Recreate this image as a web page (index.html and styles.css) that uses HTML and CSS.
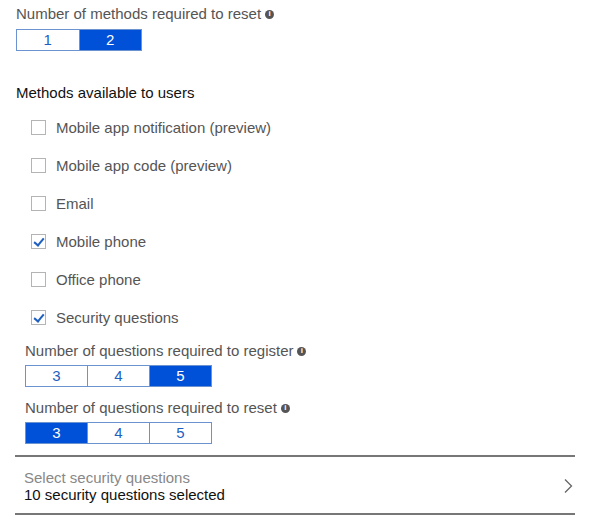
FILE: index.html
```html
<html lang="en">

<head>
  <meta charset="UTF-8">
  <title>Password reset methods</title>
  <link rel="stylesheet" href="styles.css">
</head>

<body>
  <div class="field top">
    <div class="label">Number of methods required to reset <span class="info">i</span></div>
    <div class="seg seg2">
      <span>1</span>
      <span class="on">2</span>
    </div>
  </div>

  <h2>Methods available to users</h2>
  <ul class="methods">
    <li><span class="box"></span>Mobile app notification (preview)</li>
    <li><span class="box"></span>Mobile app code (preview)</li>
    <li><span class="box"></span>Email</li>
    <li><span class="box checked"></span>Mobile phone</li>
    <li><span class="box"></span>Office phone</li>
    <li><span class="box checked"></span>Security questions</li>
  </ul>

  <div class="sub">
    <div class="field">
      <div class="label">Number of questions required to register <span class="info">i</span></div>
      <div class="seg seg3">
        <span>3</span>
        <span>4</span>
        <span class="on">5</span>
      </div>
    </div>
    <div class="field">
      <div class="label">Number of questions required to reset <span class="info">i</span></div>
      <div class="seg seg3">
        <span class="on">3</span>
        <span>4</span>
        <span>5</span>
      </div>
    </div>
  </div>

  <div class="picker">
    <div>
      <div class="picker-title">Select security questions</div>
      <div class="picker-value">10 security questions selected</div>
    </div>
    <svg class="chev" width="10" height="16" viewBox="0 0 10 16">
      <path d="M2 1.5 L8.5 8 L2 14.5" fill="none" stroke="#666" stroke-width="1.3"/>
    </svg>
  </div>
</body>

</html>
```

FILE: styles.css
```css
body {
  font-family: "Liberation Sans", Arial, sans-serif;
  font-size: 15px;
  color: #555;
  margin: 0;
  padding: 5px 20px 0 16px;
}

.label {
  line-height: 18px;
  display: flex;
  align-items: center;
  gap: 4px;
}

.info {
  display: inline-flex;
  align-items: center;
  justify-content: center;
  width: 9px;
  height: 9px;
  border-radius: 50%;
  background: #555;
  color: #fff;
  font-size: 8px;
  font-weight: bold;
  line-height: 1;
}

.seg {
  display: flex;
  margin-top: 6px;
  border: 1px solid #6a93cf;
}

.seg span {
  width: 62px;
  height: 20px;
  line-height: 20px;
  text-align: center;
  color: #1f5fbf;
  border-left: 1px solid #6a93cf;
}

.seg span:first-child {
  border-left: none;
}

.seg span.on {
  background: #0050d8;
  color: #fff;
}

.seg2 {
  width: 124px;
}

.seg3 {
  width: 185px;
}

h2 {
  font-size: 15px;
  font-weight: normal;
  color: #111;
  margin: 33px 0 0;
  line-height: 18px;
}

.methods {
  list-style: none;
  margin: 6px 0 0;
  padding: 0 0 0 16px;
}

.methods li {
  display: flex;
  align-items: center;
  height: 38px;
  gap: 10px;
}

.box {
  width: 13px;
  height: 13px;
  border: 1px solid #b4b4b4;
  position: relative;
  margin-left: -1px;
}

.box.checked::after {
  content: "";
  position: absolute;
  left: 4px;
  top: 1px;
  width: 4px;
  height: 8px;
  border: solid #1f5fbf;
  border-width: 0 2px 2px 0;
  transform: rotate(40deg);
}

.sub {
  padding-left: 9px;
  margin-top: 6px;
}

.sub .field + .field {
  margin-top: 12px;
}

.sub .seg {
  margin-top: 5px;
}

.picker {
  margin-top: 11px;
  border-top: 2px solid #777;
  border-bottom: 2px solid #777;
  width: 560px;
  margin-left: -1px;
  display: flex;
  align-items: center;
  justify-content: space-between;
  padding: 12px 0 10px 9px;
  box-sizing: border-box;
}

.picker-title {
  color: #888;
  line-height: 17px;
}

.picker-value {
  color: #111;
  line-height: 17px;
}

.chev {
  margin-right: 2px;
}
```
